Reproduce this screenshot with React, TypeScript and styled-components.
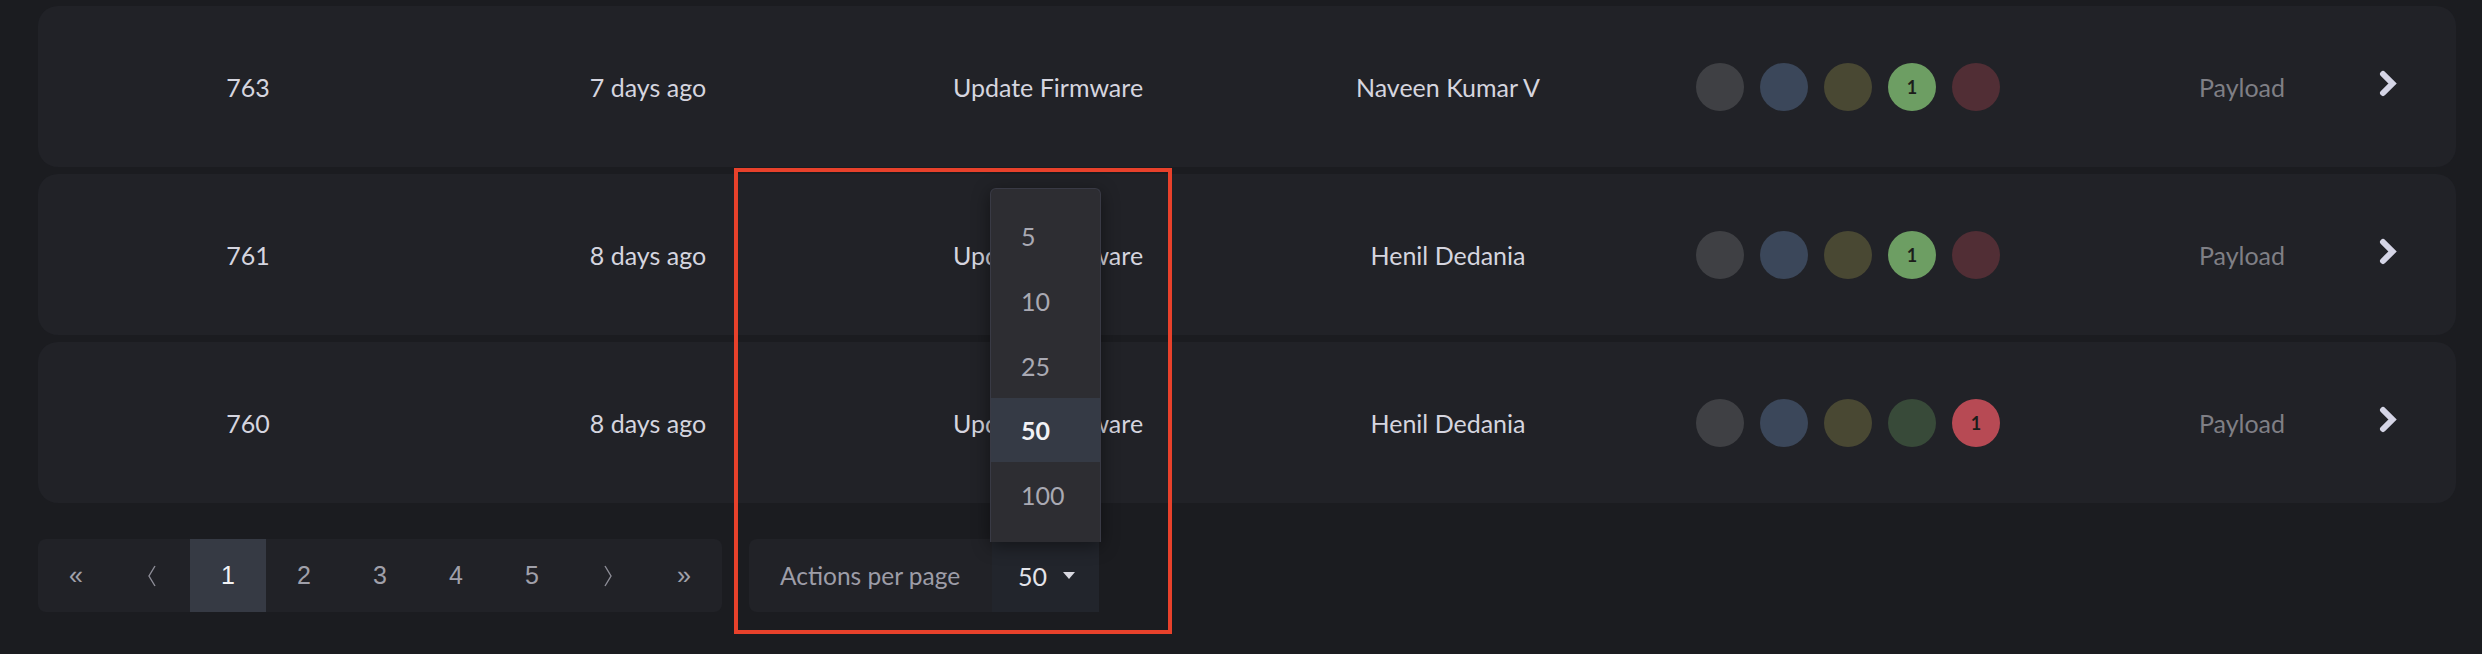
import * as React from "react";
import styled, { createGlobalStyle } from "styled-components";

type Row = {
    id: number
    when: string
    action: string
    user: string
    counts: (number | null)[]
}

const rows: Row[] = [
    { id: 763, when: "7 days ago", action: "Update Firmware", user: "Naveen Kumar V", counts: [null, null, null, 1, null] },
    { id: 761, when: "8 days ago", action: "Update Firmware", user: "Henil Dedania", counts: [null, null, null, 1, null] },
    { id: 760, when: "8 days ago", action: "Update Firmware", user: "Henil Dedania", counts: [null, null, null, null, 1] },
]

// idle / active colour for each status dot
const dotColors = [
    { idle: "#3f4044", active: "#5c5e66" },
    { idle: "#3b475a", active: "#5877a8" },
    { idle: "#494833", active: "#a7a050" },
    { idle: "#384a39", active: "#6d9e63" },
    { idle: "#512e35", active: "#b74a54" },
]

const pageSizes = [5, 10, 25, 50, 100]

const GlobalStyle = createGlobalStyle`
  html, body {
    margin: 0;
    padding: 0;
    background: #1b1c20;
  }
  body {
    font-family: Lato, "Noto Sans", sans-serif;
  }
`

export default function App() {
    const perPage = 50
    return (
        <>
            <GlobalStyle />
            <Page>
                <List>
                    {rows.map(r => (
                        <RowCard key={r.id}>
                            <Cell>{r.id}</Cell>
                            <Cell>{r.when}</Cell>
                            <Cell>{r.action}</Cell>
                            <Cell>{r.user}</Cell>
                            <Dots>
                                {r.counts.map((c, i) => (
                                    <Dot key={i} $bg={c ? dotColors[i].active : dotColors[i].idle}>
                                        {c ?? ""}
                                    </Dot>
                                ))}
                            </Dots>
                            <Cell $muted $offset={100}>Payload</Cell>
                            <ChevronCell>
                                <svg width="18" height="27" viewBox="0 0 18 27">
                                    <polyline points="4,4 13.5,13.5 4,23" fill="none" stroke="#d5d5e6" strokeWidth="6" strokeLinecap="round" strokeLinejoin="miter" />
                                </svg>
                            </ChevronCell>
                        </RowCard>
                    ))}
                </List>

                <Footer>
                    <Pager>
                        <PageCell>«</PageCell>
                        <PageCell>
                            <svg width="10" height="22" viewBox="0 0 10 22">
                                <polyline points="8,1 2,11 8,21" fill="none" stroke="#8d8d97" strokeWidth="1.4" />
                            </svg>
                        </PageCell>
                        {[1, 2, 3, 4, 5].map(n => (
                            <PageCell key={n} $active={n === 1}>{n}</PageCell>
                        ))}
                        <PageCell>
                            <svg width="10" height="22" viewBox="0 0 10 22">
                                <polyline points="2,1 8,11 2,21" fill="none" stroke="#8d8d97" strokeWidth="1.4" />
                            </svg>
                        </PageCell>
                        <PageCell>»</PageCell>
                    </Pager>

                    <PerPage>
                        <PerPageLabel>Actions per page</PerPageLabel>
                        <Select>
                            {perPage}
                            <Caret />
                            <Menu>
                                {pageSizes.map(s => (
                                    <MenuItem key={s} $selected={s === perPage}>{s}</MenuItem>
                                ))}
                            </Menu>
                        </Select>
                        <Highlight />
                    </PerPage>
                </Footer>
            </Page>
        </>
    )
}

const Page = styled.div`
  box-sizing: border-box;
  width: 2482px;
  height: 654px;
  overflow: hidden;
  padding: 6px 26px 0 38px;
  background: #1b1c20;
`

const List = styled.div`
  display: flex;
  flex-direction: column;
  gap: 7px;
`

const RowCard = styled.div`
  box-sizing: border-box;
  height: 161px;
  display: grid;
  grid-template-columns: repeat(5, 400px) 288px 1fr;
  align-items: center;
  padding: 0 16px 0 10px;
  background: #212227;
  border-radius: 20px;
`

const Cell = styled.div<{ $muted?: boolean; $offset?: number }>`
  text-align: center;
  font-size: 25px;
  color: ${p => (p.$muted ? "#7f7f85" : "#d5d5df")};
  padding-left: ${p => p.$offset ?? 0}px;
  white-space: nowrap;
`

const Dots = styled.div`
  display: flex;
  justify-content: center;
  gap: 16px;
`

const Dot = styled.div<{ $bg: string }>`
  width: 48px;
  height: 48px;
  border-radius: 50%;
  background: ${p => p.$bg};
  display: flex;
  align-items: center;
  justify-content: center;
  font-size: 18px;
  font-weight: 700;
  color: #1c1d1a;
`

const ChevronCell = styled.div`
  display: flex;
  justify-content: center;
  margin-top: -7px;
`

const Footer = styled.div`
  display: flex;
  align-items: stretch;
  gap: 27px;
  margin-top: 36px;
  height: 73px;
`

const Pager = styled.div`
  display: flex;
  background: #212227;
  border-radius: 8px;
  overflow: hidden;
`

const PageCell = styled.div<{ $active?: boolean }>`
  width: 76px;
  display: flex;
  align-items: center;
  justify-content: center;
  font-family: "Liberation Sans", Arial, sans-serif;
  font-size: 25px;
  color: ${p => (p.$active ? "#f2f2f5" : "#a0a0aa")};
  background: ${p => (p.$active ? "#363a44" : "transparent")};
`

const PerPage = styled.div`
  position: relative;
  display: flex;
  align-items: center;
  background: #212227;
  border-radius: 8px;
`

const PerPageLabel = styled.span`
  box-sizing: border-box;
  width: 243px;
  padding-left: 31px;
  font-size: 24.5px;
  color: #9d9da7;
  white-space: nowrap;
`

const Select = styled.div`
  position: relative;
  align-self: stretch;
  box-sizing: border-box;
  width: 107px;
  display: flex;
  align-items: center;
  gap: 16px;
  padding-left: 26px;
  font-size: 25px;
  color: #e4e4ea;
  background: #22252c;
`

const Caret = styled.span`
  width: 0;
  height: 0;
  border-left: 6px solid transparent;
  border-right: 6px solid transparent;
  border-top: 7px solid #d8d8e0;
`

const Menu = styled.div`
  position: absolute;
  left: -2px;
  bottom: 70px;
  box-sizing: border-box;
  width: 111px;
  padding: 15px 0;
  display: flex;
  flex-direction: column;
  background: #2d2d32;
  border: 1px solid #393a45;
  border-bottom: none;
  border-radius: 6px 6px 0 0;
  box-shadow: 0 4px 18px rgba(0, 0, 0, 0.45);
  z-index: 2;
`

const MenuItem = styled.div<{ $selected?: boolean }>`
  height: 64.6px;
  display: flex;
  align-items: center;
  padding-left: 30px;
  font-size: 25px;
  font-weight: ${p => (p.$selected ? 700 : 400)};
  color: ${p => (p.$selected ? "#f2f2f6" : "#a9a9b3")};
  background: ${p => (p.$selected ? "#353a45" : "transparent")};
`

const Highlight = styled.div`
  position: absolute;
  left: -15px;
  top: -371px;
  width: 438px;
  height: 466px;
  box-sizing: border-box;
  border: 4px solid #e8412b;
  pointer-events: none;
  z-index: 3;
`
